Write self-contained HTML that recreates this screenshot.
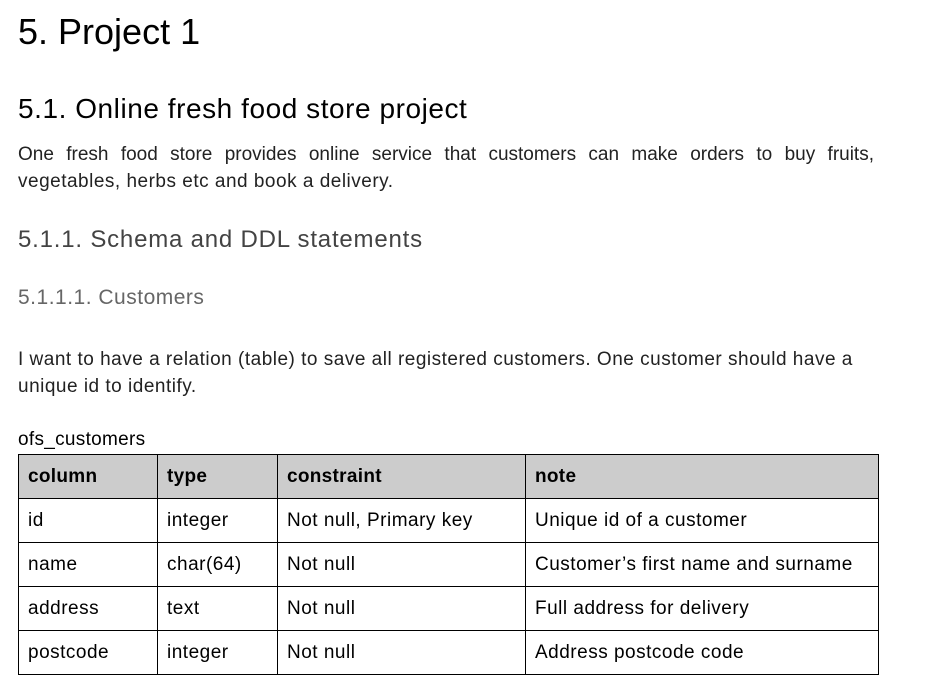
<!DOCTYPE html>
<html><head><meta charset="utf-8"><style>
body{margin:0;width:946px;height:696px;background:#fff;font-family:"Liberation Sans",Arial,sans-serif;color:#000;position:relative;overflow:hidden}
.a{position:absolute;left:18px;white-space:nowrap}
.b{font-size:19px;line-height:27px;color:#222;letter-spacing:0.5px}
.j{text-align:justify;text-align-last:justify;width:856px;letter-spacing:0}
table{position:absolute;left:18px;top:454px;border-collapse:collapse;font-size:19px;letter-spacing:0.5px}
td{border:1px solid #000;height:44px;padding:0 0 0 9px;box-sizing:border-box;vertical-align:middle}
tr.h td{background:#ccc;font-weight:bold;height:44px;letter-spacing:0.3px}
</style></head><body>
<div class="a" style="top:14px;font-size:36px;line-height:36px">5. Project 1</div>
<div class="a" style="top:95px;font-size:28px;line-height:28px;letter-spacing:0.55px">5.1. Online fresh food store project</div>
<div class="a b j" style="top:141px">One fresh food store provides online service that customers can make orders to buy fruits,</div>
<div class="a b" style="top:168px">vegetables, herbs etc and book a delivery.</div>
<div class="a" style="top:228px;font-size:24px;line-height:24px;color:#434343;letter-spacing:0.8px">5.1.1. Schema and DDL statements</div>
<div class="a" style="top:287px;font-size:21px;line-height:21px;color:#666;letter-spacing:0.5px">5.1.1.1. Customers</div>
<div class="a b" style="top:346px">I want to have a relation (table) to save all registered customers. One customer should have a</div>
<div class="a b" style="top:373px">unique id to identify.</div>
<div class="a" style="top:430px;font-size:19px;line-height:19px;letter-spacing:0.3px">ofs_customers</div>
<table>
<tr class="h"><td style="width:139px">column</td><td style="width:120px">type</td><td style="width:248px">constraint</td><td style="width:353px">note</td></tr>
<tr><td>id</td><td>integer</td><td>Not null, Primary key</td><td>Unique id of a customer</td></tr>
<tr><td>name</td><td>char(64)</td><td>Not null</td><td>Customer’s first name and surname</td></tr>
<tr><td>address</td><td>text</td><td>Not null</td><td>Full address for delivery</td></tr>
<tr><td>postcode</td><td>integer</td><td>Not null</td><td>Address postcode code</td></tr>
</table>
</body></html>
